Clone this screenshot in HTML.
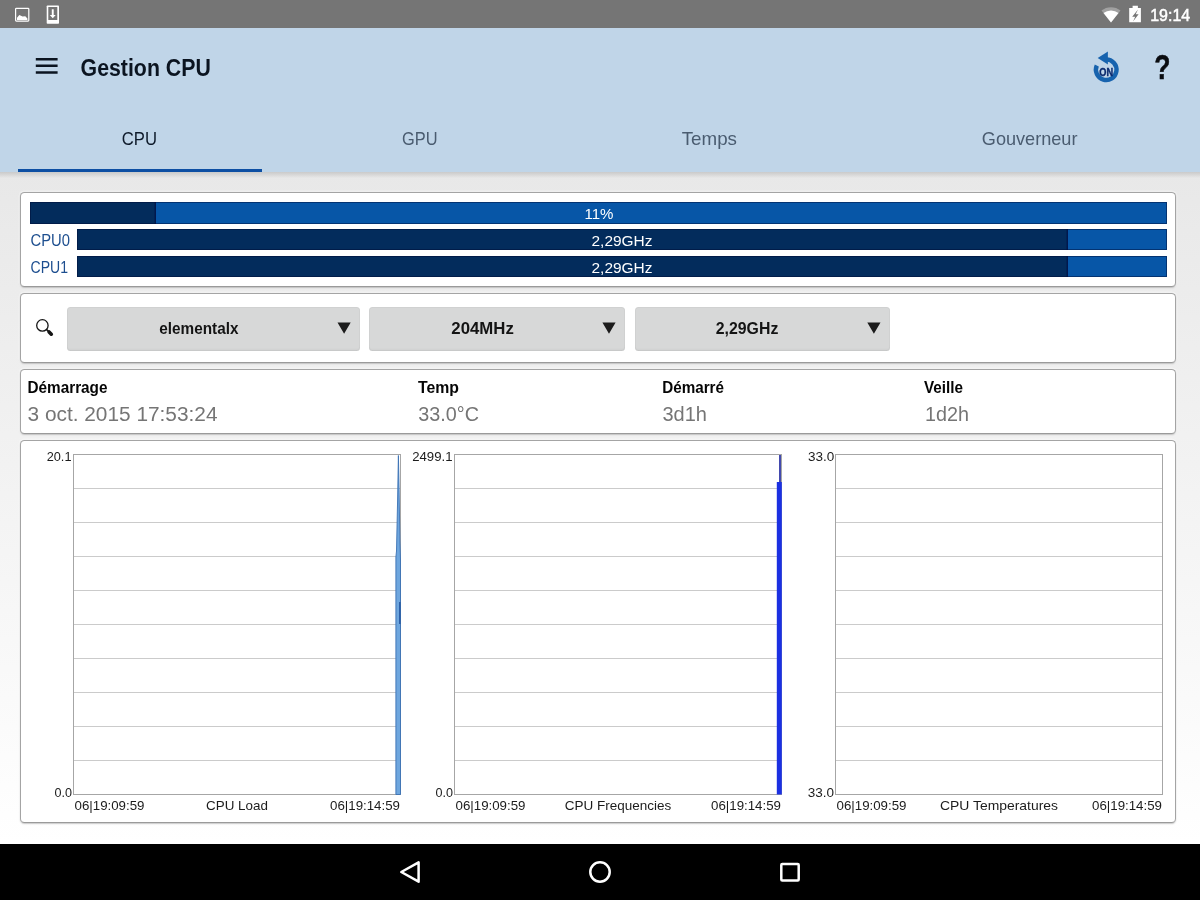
<!DOCTYPE html>
<html><head><meta charset="utf-8"><title>Gestion CPU</title>
<style>
*{margin:0;padding:0;box-sizing:border-box}
html,body{width:1200px;height:900px;overflow:hidden;background:#fff;font-family:"Liberation Sans",sans-serif;}
.abs{position:absolute}
#status{left:0;top:0;width:1200px;height:28.300px;background:#757575}
#appbar{left:0;top:28.300px;width:1200px;height:143.700px;background:#c0d5e8}
#content{left:0;top:172px;width:1200px;height:672px;background:linear-gradient(#e8e8e8,#ffffff)}
#shadow{left:0;top:172px;width:1200px;height:6px;background:linear-gradient(rgba(0,0,0,.13),rgba(0,0,0,0))}
#nav{left:0;top:843.800px;width:1200px;height:56.200px;background:#000}
.card{position:absolute;left:20px;width:1156.300px;background:#fff;border:1px solid #a4a4a4;border-bottom-color:#9a9a9a;border-radius:4.500px;box-shadow:0 1px 1.500px rgba(0,0,0,.22),0 0 0 1.500px rgba(255,255,255,.35)}
.bar{position:absolute;background:#0756a7;overflow:hidden}
.bar i{position:absolute;left:0;top:0;bottom:0;background:#032c5c;display:block;box-shadow:inset -1.500px 0 0 rgba(0,0,60,.45)}
.bar:after{content:"";position:absolute;left:0;top:0;right:0;bottom:0;box-shadow:inset 0 0 0 1px rgba(0,8,50,.45)}
.dd{position:absolute;top:307px;height:43.700px;background:#d7d8d8;border-radius:3.500px;box-shadow:inset 0 0 0 1px rgba(0,0,0,.03),inset 0 -3px 3px -2px rgba(0,0,0,.06)}
</style></head><body>
<div id="status" class="abs"></div>
<div id="appbar" class="abs"></div>
<div id="content" class="abs"></div>
<div id="shadow" class="abs"></div>
<div id="nav" class="abs"></div>
<div class="abs" style="left:17.500px;top:168.600px;width:244px;height:3.400px;background:#0d4fa3"></div>

<div class="card" style="top:192px;height:95px"></div>
<div class="bar" style="left:29.500px;top:201.500px;width:1137.200px;height:22px"><i style="width:126.500px"></i></div>
<div class="bar" style="left:76.500px;top:229px;width:1090.200px;height:21px"><i style="width:991px"></i></div>
<div class="bar" style="left:76.500px;top:256px;width:1090.200px;height:21px"><i style="width:991px"></i></div>

<div class="card" style="top:293px;height:70.300px"></div>
<div class="dd" style="left:67px;width:293px"></div>
<div class="dd" style="left:369.300px;width:255.700px"></div>
<div class="dd" style="left:634.600px;width:255.700px"></div>

<div class="card" style="top:369px;height:65.300px"></div>
<div class="card" style="top:440px;height:383px"></div>
<svg class="abs" style="left:0;top:440px" width="1200" height="382" viewBox="0 440 1200 382">
<g stroke="#cbcbcb" stroke-width="1" fill="none">
<path d="M73.5 488.5H400.5"/>
<path d="M73.5 522.5H400.5"/>
<path d="M73.5 556.5H400.5"/>
<path d="M73.5 590.5H400.5"/>
<path d="M73.5 624.5H400.5"/>
<path d="M73.5 658.5H400.5"/>
<path d="M73.5 692.5H400.5"/>
<path d="M73.5 726.5H400.5"/>
<path d="M73.5 760.5H400.5"/>
</g>
<rect x="73.5" y="454.5" width="327.0" height="340.0" fill="none" stroke="#a6a6a6" stroke-width="1"/>
<g stroke="#cbcbcb" stroke-width="1" fill="none">
<path d="M454.5 488.5H781.5"/>
<path d="M454.5 522.5H781.5"/>
<path d="M454.5 556.5H781.5"/>
<path d="M454.5 590.5H781.5"/>
<path d="M454.5 624.5H781.5"/>
<path d="M454.5 658.5H781.5"/>
<path d="M454.5 692.5H781.5"/>
<path d="M454.5 726.5H781.5"/>
<path d="M454.5 760.5H781.5"/>
</g>
<rect x="454.5" y="454.5" width="327.0" height="340.0" fill="none" stroke="#a6a6a6" stroke-width="1"/>
<g stroke="#cbcbcb" stroke-width="1" fill="none">
<path d="M835.5 488.5H1162.5"/>
<path d="M835.5 522.5H1162.5"/>
<path d="M835.5 556.5H1162.5"/>
<path d="M835.5 590.5H1162.5"/>
<path d="M835.5 624.5H1162.5"/>
<path d="M835.5 658.5H1162.5"/>
<path d="M835.5 692.5H1162.5"/>
<path d="M835.5 726.5H1162.5"/>
<path d="M835.5 760.5H1162.5"/>
</g>
<rect x="835.5" y="454.5" width="327.0" height="340.0" fill="none" stroke="#a6a6a6" stroke-width="1"/>
<path d="M398.400 455.500 L397.600 500 L396.500 551 L395.900 557 L395.900 794.500 L400.500 794.500 L400.500 560 L399.900 540 L399.100 490 Z" fill="#6ea6de" stroke="#3a70b3" stroke-width="0.900" stroke-linejoin="round"/>
<path d="M399.800 602V624" stroke="#1d4f9a" stroke-width="1.200"/>
<path d="M780 455 V482" stroke="#141c9a" stroke-width="1.600"/>
<rect x="776.800" y="482" width="5" height="312.500" fill="#1b30e2"/>
</svg>
<svg class="abs" style="left:0;top:0;will-change:transform" width="1200" height="900" viewBox="0 0 1200 900" font-family="Liberation Sans, sans-serif">
 <!-- status: image icon -->
 <rect x="15.600" y="8.300" width="13.200" height="12.800" rx="0.800" fill="none" stroke="#fff" stroke-width="1.200"/>
 <path d="M17 20 L17 17.800 L19.300 15 L22.600 16.600 L25.300 16.200 L27.400 18.500 L27.400 20 Z" fill="#fff"/>
 <!-- status: download icon -->
 <rect x="46.700" y="5.400" width="12.300" height="18.300" rx="0.800" fill="#fff"/>
 <rect x="48.300" y="7" width="9" height="13" fill="#757575"/>
 <path d="M51.800 9.300h1.900v5.800h2l-2.950 3.100l-2.950-3.100h2z" fill="#fff"/>
 <!-- wifi -->
 <path d="M1111 22.400 L1101.500 10.600 A15.200 15.200 0 0 1 1120.500 10.600 Z" fill="#fff" fill-opacity=".32"/>
 <path d="M1111 22.400 L1103.500 13.100 A12 12 0 0 1 1118.500 13.100 Z" fill="#fff"/>
 <!-- battery -->
 <path d="M1129.200 8h3.400v-2.300h5.300v2.300h3v14.300h-11.700z" fill="#fff"/>
 <path d="M1138 9.400l-5.800 7.300h3l-2.200 4.900l5.600-7.400h-2.900z" fill="#757575"/>
 <!-- hamburger -->
 <path d="M35.800 59.300h21.800M35.800 65.800h21.800M35.800 72.400h21.800" stroke="#0b1420" stroke-width="2.500" fill="none"/>
 <!-- refresh ON -->
 <path d="M1106.200 59.400 A10.300 10.300 0 1 1 1096.800 65.500" fill="none" stroke="#1763ae" stroke-width="4.400"/>
 <path d="M1097.700 58 L1107.900 51.400 L1107.900 64.600 Z" fill="#1763ae"/>
 <text x="1099.300" y="76" font-size="10.600" font-weight="bold" fill="#0b2a6e" stroke="#0b2a6e" stroke-width=".4" textLength="13.800" lengthAdjust="spacingAndGlyphs">ON</text>
 <!-- question -->
 <text x="1154.300" y="79" font-size="35.500" font-weight="bold" fill="#0a0c10" stroke="#0a0c10" stroke-width=".5" textLength="16.200" lengthAdjust="spacingAndGlyphs">?</text>
 <!-- search -->
 <circle cx="42.400" cy="325.400" r="5.700" fill="none" stroke="#151515" stroke-width="1.300"/>
 <path d="M46.400 329.400 L51.200 334.100" stroke="#151515" stroke-width="1.600"/>
 <path d="M49.100 332 L51.300 334.200" stroke="#151515" stroke-width="3.600" stroke-linecap="round"/>
 <!-- dropdown arrows -->
 <path d="M337.500 322.500h13.200l-6.600 11.200z M602.400 322.500h13.200l-6.600 11.200z M867.300 322.500h13.200l-6.600 11.200z" fill="#1c1c1c"/>
 <!-- nav -->
 <g fill="none" stroke="#fff" stroke-width="2.500" stroke-linejoin="round">
 <path d="M418.600 862.300 L418.600 881.700 L401.300 872 Z"/>
 <circle cx="600" cy="872" r="9.700"/>
 <rect x="781.300" y="864" width="17.400" height="16.600" rx="1"/>
 </g>
</svg>
<svg class="abs" style="left:0;top:0;will-change:transform" width="1200" height="900" viewBox="0 0 1200 900" font-family="Liberation Sans, sans-serif">
<text x="1150.20" y="21.00" font-size="16.76" font-weight="normal" fill="#fff" stroke="#fff" stroke-width="0.5" textLength="40.00" lengthAdjust="spacingAndGlyphs">19:14</text>
<text x="80.60" y="75.90" font-size="23.74" font-weight="bold" fill="#0b1420" textLength="130.20" lengthAdjust="spacingAndGlyphs">Gestion CPU</text>
<text x="121.80" y="145.40" font-size="18.16" font-weight="normal" fill="#0e1a2a" textLength="35.20" lengthAdjust="spacingAndGlyphs">CPU</text>
<text x="402.00" y="145.30" font-size="18.16" font-weight="normal" fill="#4a5c70" textLength="35.50" lengthAdjust="spacingAndGlyphs">GPU</text>
<text x="681.70" y="145.20" font-size="18.16" font-weight="normal" fill="#4a5c70" textLength="55.30" lengthAdjust="spacingAndGlyphs">Temps</text>
<text x="981.80" y="145.20" font-size="18.16" font-weight="normal" fill="#4a5c70" textLength="95.70" lengthAdjust="spacingAndGlyphs">Gouverneur</text>
<text x="584.50" y="219.00" font-size="15.36" font-weight="normal" fill="#fff" textLength="29.00" lengthAdjust="spacingAndGlyphs">11%</text>
<text x="591.50" y="245.50" font-size="15.36" font-weight="normal" fill="#fff" textLength="61.00" lengthAdjust="spacingAndGlyphs">2,29GHz</text>
<text x="591.50" y="272.80" font-size="15.36" font-weight="normal" fill="#fff" textLength="61.00" lengthAdjust="spacingAndGlyphs">2,29GHz</text>
<text x="30.50" y="245.80" font-size="16.06" font-weight="normal" fill="#1d4e8f" textLength="39.50" lengthAdjust="spacingAndGlyphs">CPU0</text>
<text x="30.50" y="272.80" font-size="16.06" font-weight="normal" fill="#1d4e8f" textLength="37.50" lengthAdjust="spacingAndGlyphs">CPU1</text>
<text x="159.30" y="334.00" font-size="16.06" font-weight="bold" fill="#141414" textLength="79.20" lengthAdjust="spacingAndGlyphs">elementalx</text>
<text x="451.30" y="334.30" font-size="16.06" font-weight="bold" fill="#141414" textLength="62.50" lengthAdjust="spacingAndGlyphs">204MHz</text>
<text x="715.80" y="334.20" font-size="16.06" font-weight="bold" fill="#141414" textLength="62.50" lengthAdjust="spacingAndGlyphs">2,29GHz</text>
<text x="27.50" y="393.40" font-size="15.92" font-weight="bold" fill="#050505" textLength="80.00" lengthAdjust="spacingAndGlyphs">Démarrage</text>
<text x="418.00" y="393.40" font-size="15.92" font-weight="bold" fill="#050505" textLength="41.00" lengthAdjust="spacingAndGlyphs">Temp</text>
<text x="662.20" y="393.40" font-size="15.92" font-weight="bold" fill="#050505" textLength="61.80" lengthAdjust="spacingAndGlyphs">Démarré</text>
<text x="924.00" y="393.40" font-size="15.92" font-weight="bold" fill="#050505" textLength="39.00" lengthAdjust="spacingAndGlyphs">Veille</text>
<text x="27.50" y="421.00" font-size="20.25" font-weight="normal" fill="#757575" textLength="190.00" lengthAdjust="spacingAndGlyphs">3 oct. 2015 17:53:24</text>
<text x="418.30" y="421.00" font-size="20.25" font-weight="normal" fill="#757575" textLength="60.70" lengthAdjust="spacingAndGlyphs">33.0°C</text>
<text x="662.50" y="421.00" font-size="20.25" font-weight="normal" fill="#757575" textLength="44.50" lengthAdjust="spacingAndGlyphs">3d1h</text>
<text x="925.00" y="421.00" font-size="20.25" font-weight="normal" fill="#757575" textLength="44.00" lengthAdjust="spacingAndGlyphs">1d2h</text>
<text x="46.70" y="461.30" font-size="13.27" font-weight="normal" fill="#1c1c1c" textLength="24.80" lengthAdjust="spacingAndGlyphs">20.1</text>
<text x="54.50" y="797.00" font-size="13.27" font-weight="normal" fill="#1c1c1c" textLength="17.50" lengthAdjust="spacingAndGlyphs">0.0</text>
<text x="74.50" y="809.80" font-size="13.27" font-weight="normal" fill="#1c1c1c" textLength="70.00" lengthAdjust="spacingAndGlyphs">06|19:09:59</text>
<text x="330.00" y="809.80" font-size="13.27" font-weight="normal" fill="#1c1c1c" textLength="70.00" lengthAdjust="spacingAndGlyphs">06|19:14:59</text>
<text x="206.10" y="809.80" font-size="13.27" font-weight="normal" fill="#1c1c1c" textLength="61.80" lengthAdjust="spacingAndGlyphs">CPU Load</text>
<text x="412.20" y="461.30" font-size="13.27" font-weight="normal" fill="#1c1c1c" textLength="40.30" lengthAdjust="spacingAndGlyphs">2499.1</text>
<text x="435.50" y="797.00" font-size="13.27" font-weight="normal" fill="#1c1c1c" textLength="17.50" lengthAdjust="spacingAndGlyphs">0.0</text>
<text x="455.50" y="809.80" font-size="13.27" font-weight="normal" fill="#1c1c1c" textLength="70.00" lengthAdjust="spacingAndGlyphs">06|19:09:59</text>
<text x="711.00" y="809.80" font-size="13.27" font-weight="normal" fill="#1c1c1c" textLength="70.00" lengthAdjust="spacingAndGlyphs">06|19:14:59</text>
<text x="564.75" y="809.80" font-size="13.27" font-weight="normal" fill="#1c1c1c" textLength="106.50" lengthAdjust="spacingAndGlyphs">CPU Frequencies</text>
<text x="807.90" y="461.30" font-size="13.27" font-weight="normal" fill="#1c1c1c" textLength="26.30" lengthAdjust="spacingAndGlyphs">33.0</text>
<text x="807.70" y="797.00" font-size="13.27" font-weight="normal" fill="#1c1c1c" textLength="26.30" lengthAdjust="spacingAndGlyphs">33.0</text>
<text x="836.50" y="809.80" font-size="13.27" font-weight="normal" fill="#1c1c1c" textLength="70.00" lengthAdjust="spacingAndGlyphs">06|19:09:59</text>
<text x="1092.00" y="809.80" font-size="13.27" font-weight="normal" fill="#1c1c1c" textLength="70.00" lengthAdjust="spacingAndGlyphs">06|19:14:59</text>
<text x="940.00" y="809.80" font-size="13.27" font-weight="normal" fill="#1c1c1c" textLength="118.00" lengthAdjust="spacingAndGlyphs">CPU Temperatures</text>
</svg>
</body></html>
